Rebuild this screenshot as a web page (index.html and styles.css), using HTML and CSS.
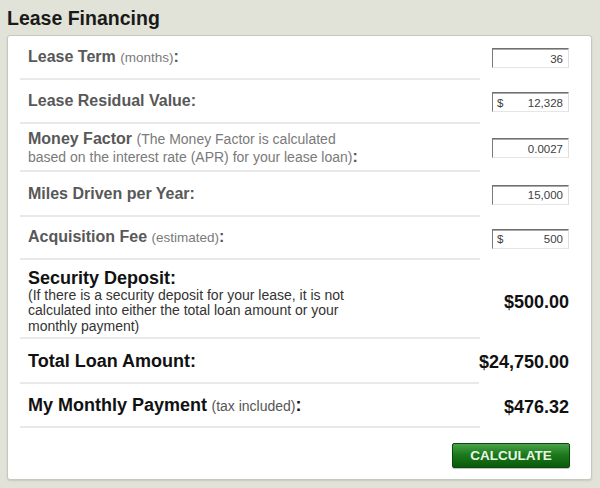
FILE: index.html
```html
<!DOCTYPE html>
<html>
<head>
<meta charset="utf-8">
<title>Lease Financing</title>
<link rel="stylesheet" href="styles.css">
</head>
<body>
<h1 class="title">Lease Financing</h1>
<div class="panel">
  <div class="row h44">
    <div class="lbl"><span class="txt"><b>Lease Term</b> <span class="note">(months)</span><b>:</b></span></div>
    <div class="val"><span class="field"><span class="num">36</span></span></div>
  </div>
  <div class="row h44">
    <div class="lbl"><span class="txt"><b>Lease Residual Value:</b></span></div>
    <div class="val"><span class="field"><span class="cur">$</span><span class="num">12,328</span></span></div>
  </div>
  <div class="row h48">
    <div class="lbl"><span class="txt two"><b>Money Factor</b> <span class="note wide">(The Money Factor is calculated<br>based on the interest rate (APR) for your lease loan)</span><b>:</b></span></div>
    <div class="val"><span class="field"><span class="num">0.0027</span></span></div>
  </div>
  <div class="row h45">
    <div class="lbl"><span class="txt"><b>Miles Driven per Year:</b></span></div>
    <div class="val"><span class="field"><span class="num">15,000</span></span></div>
  </div>
  <div class="row h43">
    <div class="lbl"><span class="txt"><b>Acquisition Fee</b> <span class="note">(estimated)</span><b>:</b></span></div>
    <div class="val"><span class="field"><span class="cur">$</span><span class="num">500</span></span></div>
  </div>
  <div class="row h79">
    <div class="lbl"><span class="txt dark deposit">
      <b class="big">Security Deposit:</b>
      <span class="small">(If there is a security deposit for your lease, it is not<br>calculated into either the total loan amount or your<br>monthly payment)</span>
    </span></div>
    <div class="val"><span class="amount low">$500.00</span></div>
  </div>
  <div class="row h45">
    <div class="lbl"><span class="txt dark"><b class="big">Total Loan Amount:</b></span></div>
    <div class="val"><span class="amount">$24,750.00</span></div>
  </div>
  <div class="row h44">
    <div class="lbl"><span class="txt dark"><b class="big">My Monthly Payment</b> <span class="note dk">(tax included)</span><b class="big">:</b></span></div>
    <div class="val"><span class="amount">$476.32</span></div>
  </div>
  <div class="actions">
    <button class="btn" type="button">CALCULATE</button>
  </div>
</div>
</body>
</html>
```

FILE: styles.css
```css
html, body {
  margin: 0;
  padding: 0;
}
body {
  background: #e2e3d8;
  font-family: "Liberation Sans", Arial, sans-serif;
  width: 600px;
  height: 488px;
  overflow: hidden;
}
.title {
  margin: 0 0 5px 7px;
  padding-top: 6px;
  font-size: 19.5px;
  line-height: 24px;
  font-weight: bold;
  color: #1a1a1a;
}
.panel {
  margin: 0 8px 0 7px;
  background: #fff;
  border: 1px solid #c6c7bd;
  border-radius: 3px;
  box-shadow: 0 1px 2px rgba(0,0,0,0.12);
  padding: 0 22px 0 12px;
}
.row {
  display: flex;
}
.h43 { height: 43px; }
.h44 { height: 44px; }
.h45 { height: 45px; }
.h48 { height: 48px; }
.h79 { height: 79px; }
.lbl {
  width: 460px;
  box-sizing: border-box;
  padding-left: 8px;
  border-bottom: 2px solid #e9e9e9;
  display: flex;
  align-items: center;
}
.txt {
  display: block;
  color: #585858;
  font-size: 16px;
  line-height: 18px;
  white-space: nowrap;
}
.txt.two {
  line-height: 17px;
  margin-top: 1px;
}
.txt.deposit {
  margin-top: 7px;
}
.txt b {
  font-weight: bold;
}
.note {
  font-size: 13.5px;
  color: #7a7a7a;
}
.note.wide {
  font-size: 14px;
}
.dark {
  color: #111;
}
.big {
  font-size: 18px;
  line-height: 20px;
}
.note.dk {
  font-size: 14px;
  color: #555;
}
.small {
  display: block;
  font-size: 14px;
  line-height: 15.5px;
  color: #333;
  margin-top: 0;
  margin-bottom: 2px;
}
.val {
  flex: 1;
  display: flex;
  justify-content: flex-end;
  align-items: center;
}
.field {
  width: 77px;
  height: 20px;
  box-sizing: border-box;
  border: 1px solid;
  border-color: #6f6f6f #dedede #e6e6e6 #7a7a7a;
  box-shadow: inset 0 1px 0 #a9a9a9;
  background: #fff;
  display: flex;
  justify-content: space-between;
  align-items: center;
  padding: 1px 5px 0 4px;
  font-size: 11.5px;
  color: #404040;
}
.cur {
  margin-right: auto;
}
.num {
  margin-left: auto;
}
.amount {
  font-size: 18px;
  font-weight: bold;
  color: #111;
  margin-top: 2px;
}
.amount.low {
  margin-top: 6px;
}
.actions {
  display: flex;
  justify-content: flex-end;
  padding: 15px 0 11px;
  margin-right: -1px;
}
.btn {
  width: 118px;
  height: 25px;
  border: 1px solid #0c470c;
  border-radius: 2px;
  background: linear-gradient(#4aa24a 0%, #1c7a1c 45%, #0a5a0a 100%);
  color: #e9f5e6;
  font-family: "Liberation Sans", Arial, sans-serif;
  font-size: 13.5px;
  font-weight: bold;
  padding: 0;
  box-shadow: 0 1px 1px rgba(0,0,0,0.25);
}
```
